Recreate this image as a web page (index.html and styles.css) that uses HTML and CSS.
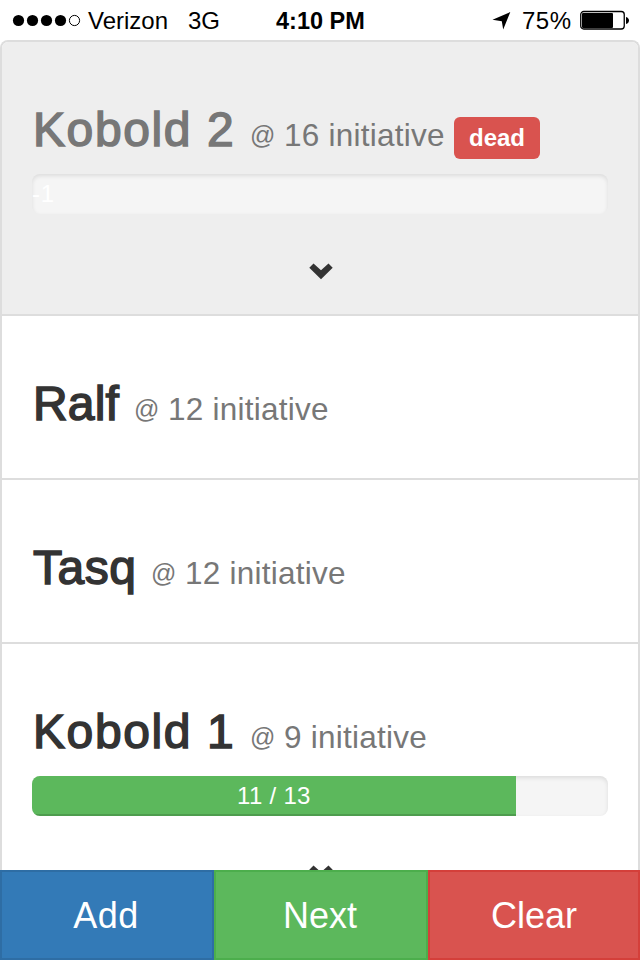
FILE: index.html
```html
<!DOCTYPE html>
<html lang="en">
<head>
<meta charset="utf-8">
<title>Initiative</title>
<link rel="stylesheet" href="styles.css">
</head>
<body>
<div class="screen">
  <header class="status">
    <svg class="signal" width="70" height="14" viewBox="0 0 70 14"><circle cx="6.5" cy="7.5" r="5.6"/><circle cx="20.5" cy="7.5" r="5.6"/><circle cx="34.5" cy="7.5" r="5.6"/><circle cx="48.5" cy="7.5" r="5.6"/><circle cx="62.5" cy="7.5" r="5.1" fill="none" stroke="#000"/></svg>
    <span class="carrier">Verizon</span>
    <span class="network">3G</span>
    <span class="time">4:10 PM</span>
    <svg class="location" width="20" height="20" viewBox="0 0 20 20"><path d="M18.3 2 11.2 19.5 9.8 11.2.5 9.8Z"/></svg>
    <span class="percent">75%</span>
    <svg class="battery" width="50" height="20" viewBox="0 0 50 20"><rect x=".75" y="1.5" width="43.5" height="17.5" rx="3" fill="none" stroke="#000" stroke-width="1.3"/><rect x="2" y="3" width="31" height="15" rx="1"/><path d="M46 7c4 1 4 6 0 7Z"/></svg>
  </header>
  <main class="list">
    <section class="item dead">
      <h3 class="title"><span class="name kobold">Kobold 2</span><small class="init"><span class="at">@</span> 16 initiative</small><span class="label">dead</span></h3>
      <div class="progress"><div class="minus">-1</div></div>
      <svg class="chevron" width="24" height="17" viewBox="0 0 24 17"><path d="M4.5 .5 12 7.2 19.5 .5 23.7 4.7 12 16.3.3 4.7Z"/></svg>
    </section>
    <section class="item">
      <h3 class="title"><span class="name ralf">Ralf</span><small class="init"><span class="at">@</span> 12 initiative</small></h3>
    </section>
    <section class="item">
      <h3 class="title"><span class="name tasq">Tasq</span><small class="init"><span class="at">@</span> 12 initiative</small></h3>
    </section>
    <section class="item">
      <h3 class="title"><span class="name kobold">Kobold 1</span><small class="init"><span class="at">@</span> 9 initiative</small></h3>
      <div class="progress"><div class="fill" style="width:84%">11 / 13</div></div>
      <svg class="chevron" width="24" height="17" viewBox="0 0 24 17"><path d="M4.5 .5 12 7.2 19.5 .5 23.7 4.7 12 16.3.3 4.7Z"/></svg>
    </section>
  </main>
  <footer class="actions">
    <button class="btn add">Add</button>
    <button class="btn next">Next</button>
    <button class="btn clear">Clear</button>
  </footer>
</div>
</body>
</html>
```
FILE: styles.css
```css
* { box-sizing: border-box; }
body { margin: 0; background: #fff; color: #333; font-family: "Liberation Sans", Arial, sans-serif; }
.screen { width: 640px; height: 960px; overflow: hidden; display: grid; grid-template-rows: 40px 830px 90px; }
.status { display: flex; align-items: center; color: #000; font-size: 24px; line-height: 38px; white-space: nowrap; padding-left: 12px; }
.status span { flex: none; padding-top: 2px; }
.status svg { flex: none; }
.signal { width: 70px; }
.status .carrier { width: 100px; padding-left: 6px; }
.status .network { width: 94px; padding-left: 6px; }
.status .time { width: 216px; font-weight: bold; font-size: 23.5px; letter-spacing: 0; }
.location { width: 20px; }
.status .percent { width: 68px; padding-left: 10px; letter-spacing: 0.5px; }
.battery { width: 50px; }
.list { overflow: hidden; border: 2px solid #ddd; border-bottom: 0; border-radius: 8px 8px 0 0; }
.item { height: 164px; border-bottom: 2px solid #ddd; padding: 58px 30px 0; }
.item.dead { height: 274px; background: #eee; }
.item:last-child { height: 274px; }
.title { margin: 0; height: 74px; display: flex; align-items: baseline; font-weight: normal; line-height: 60px; white-space: nowrap; }
.name { font-size: 48px; -webkit-text-stroke: 1.5px currentColor; }
.kobold { width: 218px; padding-left: 1px; letter-spacing: 1.6px; }
.ralf { width: 102px; padding-left: 1px; letter-spacing: 0.2px; }
.tasq { width: 119px; padding-left: 1px; letter-spacing: 0.5px; }
.init { font-size: 31.5px; color: #777; letter-spacing: 0.25px; }
.at { display: inline-block; width: 25px; font-size: 25px; line-height: 30px; position: relative; top: -2px; }
.dead .name { color: #777; }
.label { margin-left: auto; margin-right: 68px; width: 86px; height: 42px; border-radius: 6px; background: #d9534f; color: #fff; font-size: 24px; font-weight: bold; line-height: 42px; text-align: center; }
.progress { height: 40px; border-radius: 8px; overflow: hidden; background: #f5f5f5; box-shadow: inset 0 2px 4px rgba(0, 0, 0, .1); color: #fff; font-size: 24px; line-height: 40px; }
.minus { letter-spacing: 0.8px; }
.fill { height: 40px; background: #5cb85c; box-shadow: inset 0 -2px 0 rgba(0, 0, 0, .15); text-align: center; letter-spacing: 0.3px; }
.chevron { display: block; margin: 49px auto 0 277px; fill: #333; }
.actions { display: grid; grid-template-columns: 214px 214px 212px; }
.btn { border: 2px solid; border-radius: 0; padding: 2px 2px 0 0; color: #fff; font: 36px/84px "Liberation Sans", Arial, sans-serif; }
.add { background: #337ab7; border-color: #2e6da4; letter-spacing: 0.4px; }
.next { background: #5cb85c; border-color: #4cae4c; }
.clear { background: #d9534f; border-color: #d43f3a; padding-right: 0; }
```
